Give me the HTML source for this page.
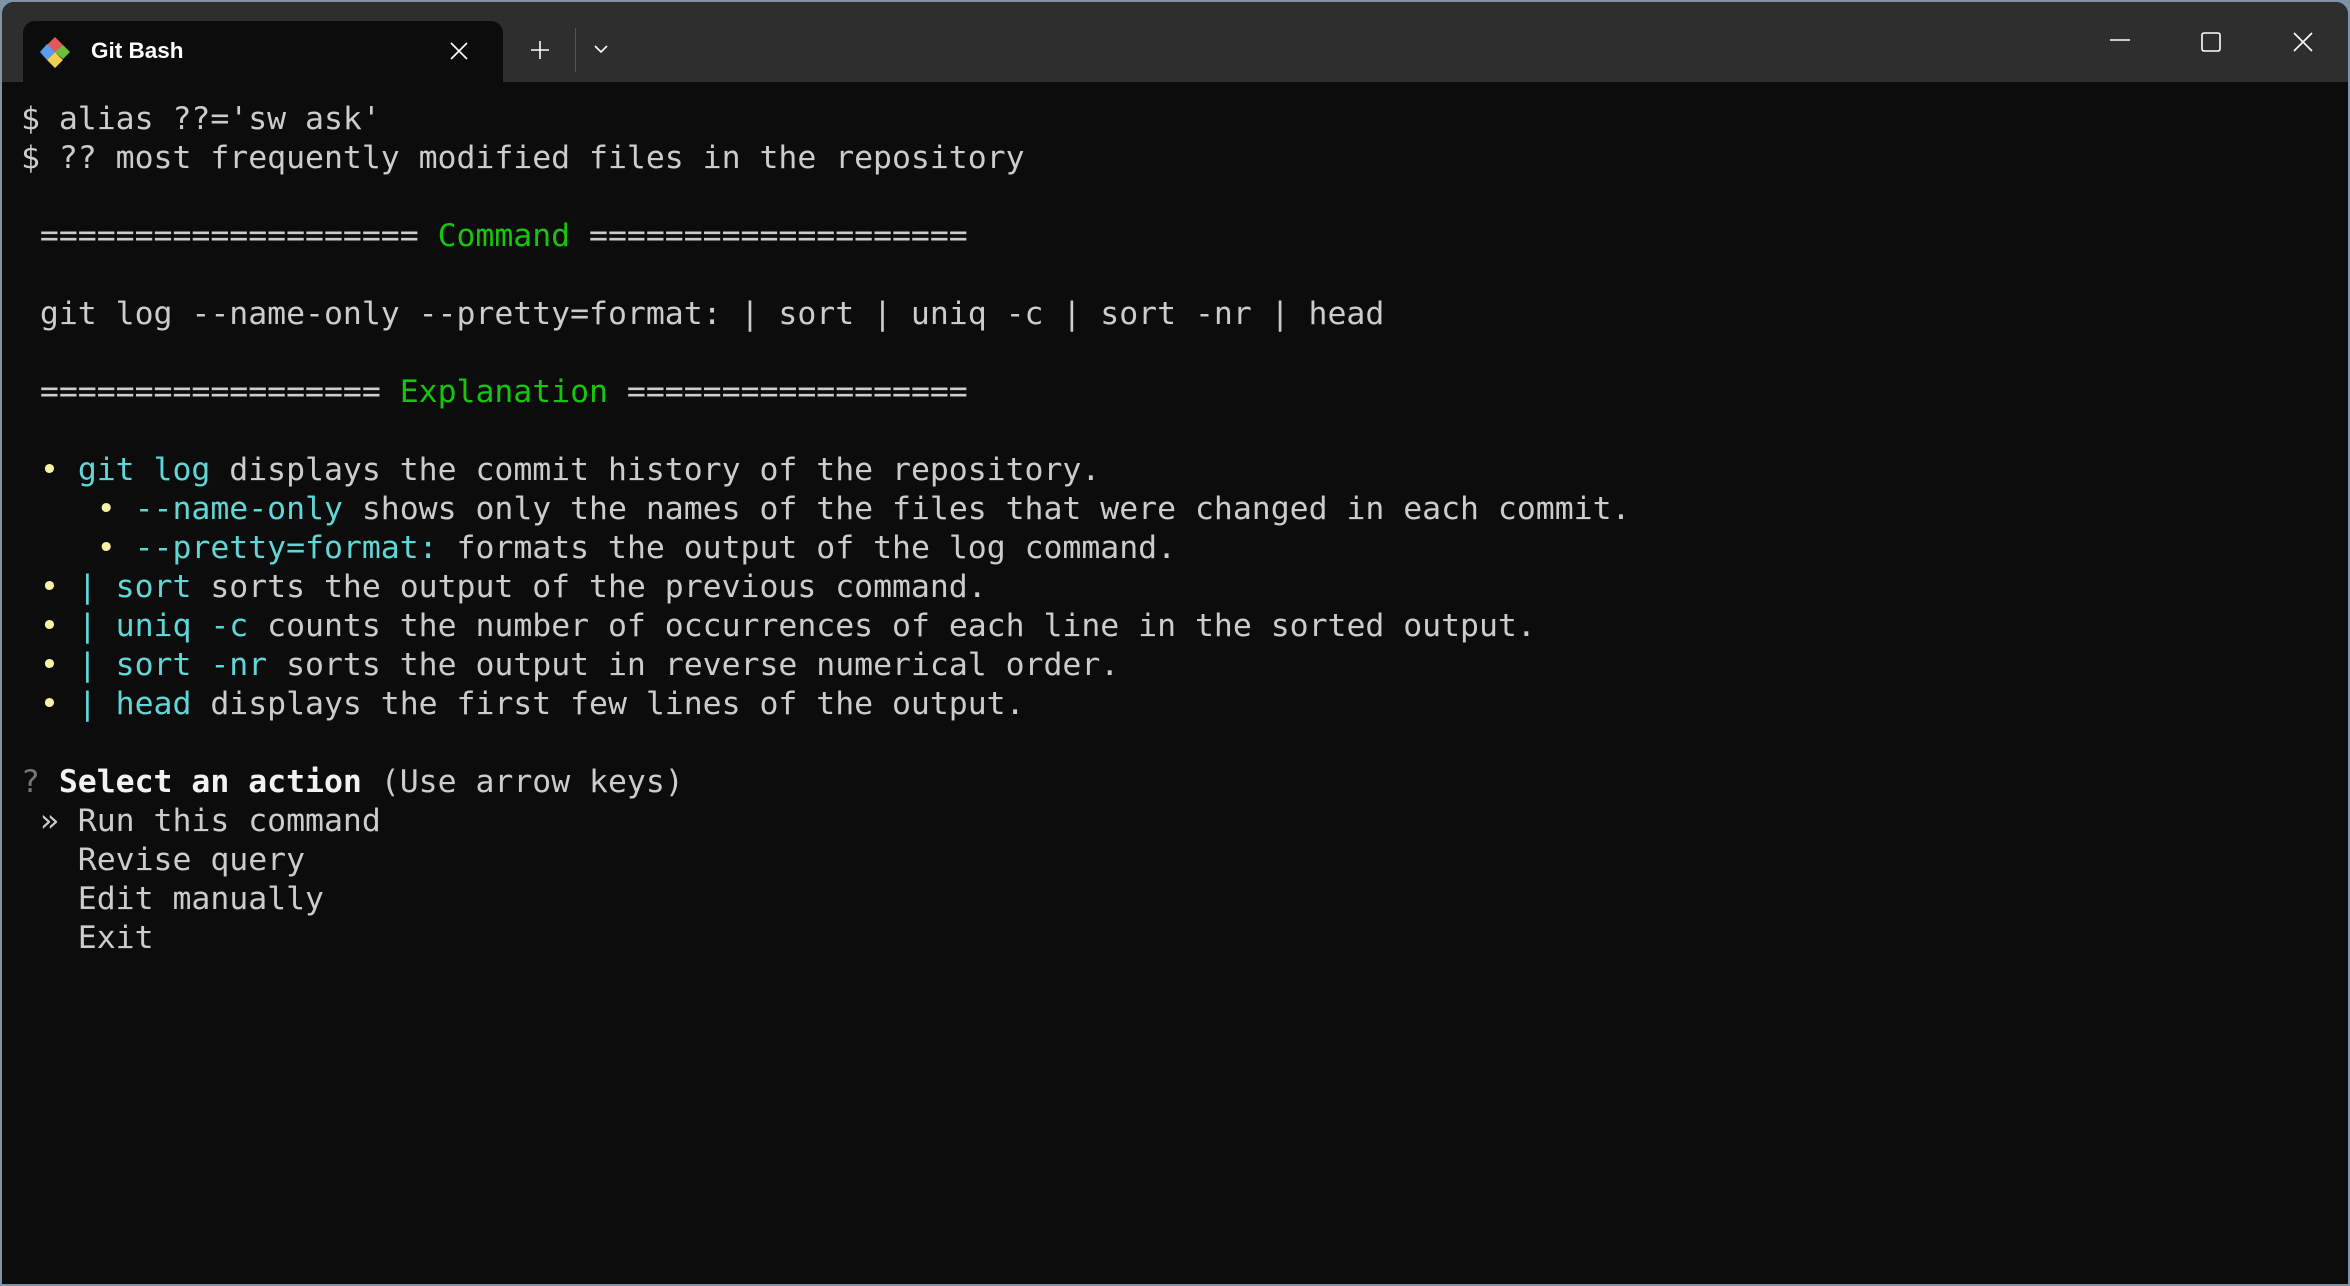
<!DOCTYPE html>
<html><head><meta charset="utf-8"><style>
html,body{margin:0;padding:0;width:2350px;height:1286px;overflow:hidden;background:#7f93a6;}
.win{position:absolute;left:2px;top:2px;width:2346px;height:1282px;background:#0c0c0c;border-radius:12px 12px 0 0;overflow:hidden;}
.bar{position:absolute;left:0;top:0;width:100%;height:80px;background:#2e2e2e;}
.tab{position:absolute;left:21px;top:19px;width:480px;height:61px;background:#0c0c0c;border-radius:12px 12px 0 0;}
.tab .t{position:absolute;left:68px;top:17px;font:600 22.5px "Liberation Sans",sans-serif;color:#fff;}
.term{position:absolute;left:19px;top:98px;font-family:"DejaVu Sans Mono","Liberation Mono",monospace;font-size:31.5px;line-height:39px;color:#cccccc;white-space:pre;letter-spacing:-0.03px;}
.g{color:#16c60c}.c{color:#61d6d6}.y{color:#f9f1a5}.b{color:#f2f2f2;font-weight:bold}.d{color:#767676}
svg{position:absolute}
</style></head><body>
<div class="win">
<div class="bar"></div>
<div class="tab">
<svg style="left:15px;top:14px" width="34" height="34" viewBox="0 0 34 34">
<polygon points="17,2 25,10 17,18 9,10" fill="#e05a5a"/>
<polygon points="25,10 32,17 25,24 17,17" fill="#6cbf3a"/>
<polygon points="17,17 25,25 17,33 9,25" fill="#f0d050"/>
<polygon points="9,9 17,17 9,25 2,17" fill="#5a9cf0"/>
</svg>
<div class="t">Git Bash</div>
<svg style="left:426px;top:20px" width="20" height="20" viewBox="0 0 20 20"><path d="M2 2L18 18M18 2L2 18" stroke="#fff" stroke-width="1.6"/></svg>
</div>
<svg style="left:528px;top:38px" width="20" height="20" viewBox="0 0 20 20"><path d="M10 1V19M1 10H19" stroke="#fff" stroke-width="1.6"/></svg>
<div style="position:absolute;left:573px;top:26px;width:1px;height:44px;background:#555"></div>
<svg style="left:591px;top:42px" width="16" height="10" viewBox="0 0 16 10"><path d="M2 2L8 8L14 2" stroke="#fff" stroke-width="1.6" fill="none"/></svg>
<svg style="left:2107px;top:36px" width="22" height="4"><path d="M1 2H21" stroke="#fff" stroke-width="1.6"/></svg>
<svg style="left:2198px;top:29px" width="22" height="22"><rect x="2" y="2" width="18" height="18" rx="2" stroke="#fff" stroke-width="1.6" fill="none"/></svg>
<svg style="left:2290px;top:29px" width="22" height="22"><path d="M2 2L20 20M20 2L2 20" stroke="#fff" stroke-width="1.6"/></svg>
<div class="term">$ alias ??='sw ask'
$ ?? most frequently modified files in the repository

 ==================== <span class="g">Command</span> ====================

 git log --name-only --pretty=format: | sort | uniq -c | sort -nr | head

 ================== <span class="g">Explanation</span> ==================

 <span class="y">•</span> <span class="c">git log</span> displays the commit history of the repository.
    <span class="y">•</span> <span class="c">--name-only</span> shows only the names of the files that were changed in each commit.
    <span class="y">•</span> <span class="c">--pretty=format:</span> formats the output of the log command.
 <span class="y">•</span> <span class="c">| sort</span> sorts the output of the previous command.
 <span class="y">•</span> <span class="c">| uniq -c</span> counts the number of occurrences of each line in the sorted output.
 <span class="y">•</span> <span class="c">| sort -nr</span> sorts the output in reverse numerical order.
 <span class="y">•</span> <span class="c">| head</span> displays the first few lines of the output.

<span class="d">?</span> <span class="b">Select an action</span> (Use arrow keys)
 » Run this command
   Revise query
   Edit manually
   Exit</div>
</div>
</body></html>
